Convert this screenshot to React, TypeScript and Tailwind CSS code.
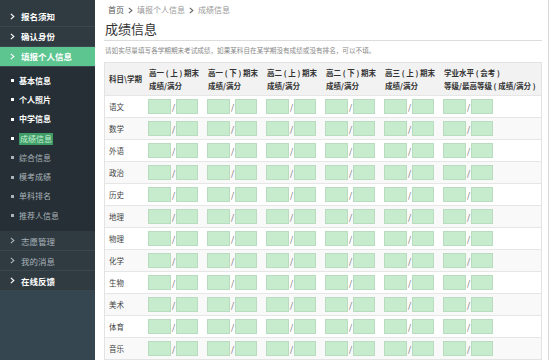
import React from 'react'

const topItems = [
  { label: '报名须知', strong: true },
  { label: '确认身份', strong: true },
]

const subItems = [
  { label: '基本信息', strong: true },
  { label: '个人照片', strong: true },
  { label: '中学信息', strong: true },
  { label: '成绩信息', active: true },
  { label: '综合信息' },
  { label: '模考成绩' },
  { label: '单科排名' },
  { label: '推荐人信息' },
]

const bottomItems = [
  { label: '志愿管理', strong: false },
  { label: '我的消息', strong: false },
  { label: '在线反馈', strong: true },
]

const terms = ['高一 ( 上 ) 期末', '高一 ( 下 ) 期末', '高二 ( 上 ) 期末', '高二 ( 下 ) 期末', '高三 ( 上 ) 期末']

const subjects = ['语文', '数学', '外语', '政治', '历史', '地理', '物理', '化学', '生物', '美术', '体育', '音乐']

function Chevron({ className }: { className?: string }) {
  return (
    <svg viewBox="0 0 6 8" className={`h-[7px] w-[5px] ${className ?? ''}`} fill="none">
      <path d="M1 0.8 L4.6 4 L1 7.2" stroke="currentColor" strokeWidth="1.4" />
    </svg>
  )
}

function NavRow({ label, strong, active }: { label: string; strong?: boolean; active?: boolean }) {
  return (
    <div
      className={`flex h-[20px] items-center gap-[6px] border-b border-[#3b474f] pl-[10px] text-[8.5px] ${
        active ? 'bg-[#5dc58f] text-white font-bold' : strong ? 'text-white font-bold' : 'text-[#a9b3b9]'
      }`}
    >
      <Chevron />
      <span>{label}</span>
    </div>
  )
}

function ScoreCell() {
  return (
    <div className="flex items-center">
      <div className="h-[15px] w-[23px] border border-[#b9dcc0] bg-[#c6ebcd]" />
      <span className="mx-[1px] text-[8px] text-[#555]">/</span>
      <div className="h-[15px] w-[22px] border border-[#b9dcc0] bg-[#c6ebcd]" />
    </div>
  )
}

export default function App() {
  return (
    <div
      className="flex h-[360px] w-[554px] overflow-hidden bg-white"
      style={{ fontFamily: '"Noto Sans CJK SC", "Noto Sans", sans-serif' }}
    >
      <aside className="flex w-[95px] shrink-0 flex-col bg-[#2f3a41]">
        <div className="h-[7px]" />
        {topItems.map((i) => (
          <NavRow key={i.label} label={i.label} strong={i.strong} />
        ))}
        <NavRow label="填报个人信息" active />
        <div className="flex flex-col bg-[#262f35] pb-[6px] pt-[4px]">
          {subItems.map((s) => (
            <div key={s.label} className="flex h-[19.3px] items-center gap-[5px] pl-[11px] text-[8px]">
              <span className={`h-[3px] w-[3px] ${s.active || s.strong ? 'bg-white' : 'bg-[#a9b3b9]'}`} />
              <span
                className={
                  s.active
                    ? 'bg-[#3f9c66] px-[1px] text-[#c7f2d6]'
                    : s.strong
                      ? 'font-bold text-white'
                      : 'text-[#a9b3b9]'
                }
              >
                {s.label}
              </span>
            </div>
          ))}
        </div>
        {bottomItems.map((i) => (
          <NavRow key={i.label} label={i.label} strong={i.strong} />
        ))}
        <div className="flex-1 bg-[#364650]" />
      </aside>

      <main className="flex w-[453px] shrink-0 flex-col pl-[9px] pr-[6px]">
        <div className="flex h-[20px] items-center gap-[4px] pl-[4px] pt-[1px] text-[8px] text-[#999]">
          <span className="text-[#555]">首页</span>
          <Chevron className="text-[#666]" />
          <span>填报个人信息</span>
          <Chevron className="text-[#666]" />
          <span>成绩信息</span>
        </div>
        <div className="border-b border-[#dcdcdc] pb-[3px] pl-[1px] text-[13px] leading-[17px] text-[#333]">成绩信息</div>
        <div className="flex h-[22px] items-center pl-[1px] text-[6.6px] text-[#888]">
          请如实尽量填写各学期期末考试成绩，如果某科目在某学期没有成绩或没有排名，可以不填。
        </div>
        <div className="border border-[#e3e3e3]">
          <div className="flex h-[32px] items-center bg-[#f2f2f2] text-[7.5px] font-bold text-[#333]">
            <div className="w-[43px] whitespace-nowrap pl-[4px]">科目\学期</div>
            {terms.map((t) => (
              <div key={t} className="flex w-[59px] flex-col gap-[3px] whitespace-nowrap pl-[1px] leading-[10px]">
                <span>{t}</span>
                <span>成绩/满分</span>
              </div>
            ))}
            <div className="flex flex-col gap-[3px] whitespace-nowrap pl-[1px] leading-[10px]">
              <span>学业水平 ( 会考 )</span>
              <span>等级/最高等级 ( 成绩/满分 )</span>
            </div>
          </div>
          {subjects.map((s, idx) => (
            <div
              key={s}
              className={`flex h-[22px] items-center border-t border-[#e6e6e6] ${idx % 2 ? 'bg-[#f9f9f9]' : 'bg-white'}`}
            >
              <div className="w-[43px] pl-[4px] text-[7.5px] text-[#444]">{s}</div>
              {[0, 1, 2, 3, 4, 5].map((c) => (
                <div key={c} className="w-[59px]">
                  <ScoreCell />
                </div>
              ))}
            </div>
          ))}
        </div>
      </main>
      <div className="w-[6px] shrink-0 border-l border-[#d8d8d8] bg-white" />
    </div>
  )
}
